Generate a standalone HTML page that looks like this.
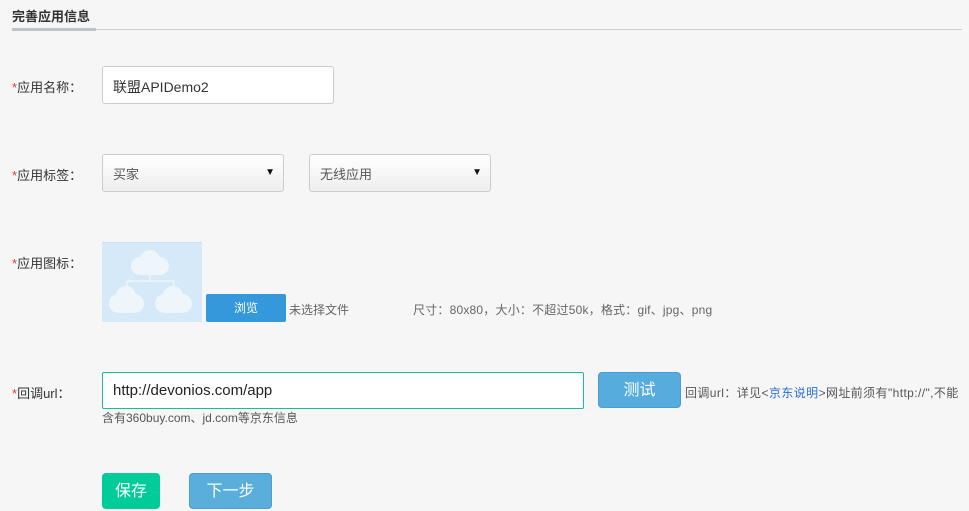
<!DOCTYPE html>
<html><head><meta charset="utf-8"><style>
body{margin:0;width:969px;height:511px;background:#f6f6f6;font-family:"Liberation Sans","Noto Sans CJK SC",sans-serif;position:relative;overflow:hidden;color:#333}
.a{position:absolute}
.lbl{font-size:13px;color:#333;left:12px}
.lbl b{color:#e4393c;font-weight:normal}
.sel{background:linear-gradient(#fff,#eee);border:1px solid #ccc;border-radius:3px;height:38px;box-sizing:border-box;font-size:13px;color:#555;padding:9px 10px;}
.sel i{position:absolute;right:8px;top:12px;font-style:normal;font-size:10px;color:#111}
</style></head><body>
<div class="a" style="left:12px;top:6px;font-size:13px;font-weight:bold;color:#333">完善应用信息</div>
<div class="a" style="left:12px;top:29px;width:950px;height:1px;background:#ccc"></div>
<div class="a" style="left:12px;top:28px;width:84px;height:3px;background:#bcc3c9"></div>

<div class="a lbl" style="top:77px"><b>*</b>应用名称：</div>
<div class="a" style="left:102px;top:66px;width:232px;height:38px;box-sizing:border-box;background:#fff;border:1px solid #ccc;border-radius:3px;font-size:14px;padding:10px 10px">联盟APIDemo2</div>

<div class="a lbl" style="top:165px"><b>*</b>应用标签：</div>
<div class="a sel" style="left:102px;top:154px;width:182px">买家<i>▼</i></div>
<div class="a sel" style="left:309px;top:154px;width:182px">无线应用<i>▼</i></div>

<div class="a lbl" style="top:253px"><b>*</b>应用图标：</div>
<div class="a" style="left:102px;top:242px;width:100px;height:80px;background:#d5e9f8;border-top:1px solid #c6e0f4;box-sizing:border-box">
<svg width="100" height="80"><g fill="#eef6fc"><rect x="29" y="14" width="38" height="18" rx="9"/><circle cx="48" cy="17" r="10"/><rect x="7" y="51" width="35" height="19" rx="9.5"/><circle cx="24" cy="53" r="10"/><rect x="53" y="51" width="37" height="19" rx="9.5"/><circle cx="71" cy="53" r="10"/></g><path d="M48 32V38M25 38H72M25 38V44M72 38V44" stroke="#eef6fc" stroke-width="1.5" fill="none"/></svg></div>
<div class="a" style="left:206px;top:294px;width:80px;height:28px;background:#3498db;border-radius:2px;color:#fff;font-size:12px;text-align:center;line-height:28px">浏览</div>
<div class="a" style="left:289px;top:301px;font-size:12px;color:#666">未选择文件</div>
<div class="a" style="left:413px;top:301px;font-size:12px;color:#666;letter-spacing:0.2px">尺寸：80x80，大小：不超过50k，格式：gif、jpg、png</div>

<div class="a lbl" style="top:383px"><b>*</b>回调url：</div>
<div class="a" style="left:102px;top:372px;width:482px;height:37px;box-sizing:border-box;background:#fff;border:1px solid #1abc9c;border-radius:2px;font-size:15px;padding:9px 10px;color:#222">http://devonios.com/app</div>
<div class="a" style="left:598px;top:372px;width:83px;height:36px;background:#55acdd;border:1px solid #4a9dcf;box-sizing:border-box;border-radius:4px;color:#fff;font-size:16px;text-align:center;line-height:36px">测试</div>
<div class="a" style="left:685px;top:384px;font-size:12px;color:#555;white-space:nowrap;letter-spacing:0.4px">回调url：详见&lt;<span style="color:#2a6fd6">京东说明</span>&gt;网址前须有"http://",不能</div>
<div class="a" style="left:102px;top:409px;font-size:12px;color:#555">含有360buy.com、jd.com等京东信息</div>

<div class="a" style="left:102px;top:473px;width:58px;height:36px;background:#00cc99;border-radius:4px;color:#fff;font-size:16px;text-align:center;line-height:38px">保存</div>
<div class="a" style="left:189px;top:473px;width:83px;height:36px;background:#5aaedc;border:1px solid #4a9dcf;box-sizing:border-box;border-radius:4px;color:#fff;font-size:16px;text-align:center;line-height:36px">下一步</div>
</body></html>
